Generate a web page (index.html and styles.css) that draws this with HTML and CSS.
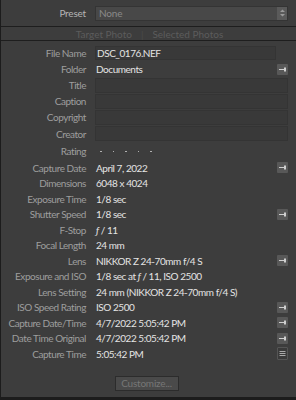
FILE: index.html
```html
<!DOCTYPE html>
<html lang="en">
<head>
  <meta charset="UTF-8" />
  <title>Metadata</title>
  <link rel="stylesheet" href="styles.css">
</head>
<body>

  <div class="panel">
    <div class="preset-row">
      <span class="label">Preset</span>
      <div class="select">
        <span>None</span>
        <span class="stepper">
          <svg width="5" height="8" viewBox="0 0 5 8"><path d="M0 3 L2.5 0.5 L5 3 Z M0 5 L2.5 7.5 L5 5 Z" fill="#9a9a9a"/></svg>
        </span>
      </div>
    </div>

    <div class="tabs">
      <span>Target Photo</span>
      <span class="sep">|</span>
      <span>Selected Photos</span>
    </div>

    <div class="fields">
      <div class="row first">
        <span class="label">File Name</span>
        <span class="value box">DSC_0176.NEF</span>
      </div>
      <div class="row">
        <span class="label">Folder</span>
        <span class="value">Documents</span>
        <span class="icon"><svg width="11" height="11" viewBox="0 0 11 11"><path d="M2 5.5 H7" stroke="#cfcfcf" stroke-width="1"/><rect x="7" y="3.5" width="2" height="4" fill="#cfcfcf"/></svg></span>
      </div>
      <div class="row">
        <span class="label">Title</span>
        <span class="value box wide"></span>
      </div>
      <div class="row">
        <span class="label">Caption</span>
        <span class="value box wide"></span>
      </div>
      <div class="row">
        <span class="label">Copyright</span>
        <span class="value box wide"></span>
      </div>
      <div class="row tall">
        <span class="label">Creator</span>
        <span class="value box wide"></span>
      </div>
      <div class="row rating-row">
        <span class="label">Rating</span>
        <span class="value rating"><i></i><i></i><i></i><i></i><i></i></span>
      </div>

      <div class="exif">
        <div class="row">
          <span class="label">Capture Date</span>
          <span class="value">April 7, 2022</span>
          <span class="icon"><svg width="11" height="11" viewBox="0 0 11 11"><path d="M2 5.5 H7" stroke="#cfcfcf" stroke-width="1"/><rect x="7" y="3.5" width="2" height="4" fill="#cfcfcf"/></svg></span>
        </div>
        <div class="row">
          <span class="label">Dimensions</span>
          <span class="value">6048 x 4024</span>
        </div>
        <div class="row">
          <span class="label">Exposure Time</span>
          <span class="value">1/8 sec</span>
        </div>
        <div class="row">
          <span class="label">Shutter Speed</span>
          <span class="value">1/8 sec</span>
          <span class="icon"><svg width="11" height="11" viewBox="0 0 11 11"><path d="M2 5.5 H7" stroke="#cfcfcf" stroke-width="1"/><rect x="7" y="3.5" width="2" height="4" fill="#cfcfcf"/></svg></span>
        </div>
        <div class="row">
          <span class="label">F-Stop</span>
          <span class="value"><em>ƒ</em> / 11</span>
        </div>
        <div class="row">
          <span class="label">Focal Length</span>
          <span class="value">24 mm</span>
        </div>
        <div class="row">
          <span class="label">Lens</span>
          <span class="value">NIKKOR Z 24-70mm f/4 S</span>
          <span class="icon"><svg width="11" height="11" viewBox="0 0 11 11"><path d="M2 5.5 H7" stroke="#cfcfcf" stroke-width="1"/><rect x="7" y="3.5" width="2" height="4" fill="#cfcfcf"/></svg></span>
        </div>
        <div class="row">
          <span class="label">Exposure and ISO</span>
          <span class="value">1/8 sec at <em>ƒ</em> / 11, ISO 2500</span>
        </div>
        <div class="row">
          <span class="label">Lens Setting</span>
          <span class="value">24 mm (NIKKOR Z 24-70mm f/4 S)</span>
        </div>
        <div class="row">
          <span class="label">ISO Speed Rating</span>
          <span class="value">ISO 2500</span>
          <span class="icon"><svg width="11" height="11" viewBox="0 0 11 11"><path d="M2 5.5 H7" stroke="#cfcfcf" stroke-width="1"/><rect x="7" y="3.5" width="2" height="4" fill="#cfcfcf"/></svg></span>
        </div>
        <div class="row">
          <span class="label">Capture Date/Time</span>
          <span class="value">4/7/2022 5:05:42 PM</span>
          <span class="icon"><svg width="11" height="11" viewBox="0 0 11 11"><path d="M2 5.5 H7" stroke="#cfcfcf" stroke-width="1"/><rect x="7" y="3.5" width="2" height="4" fill="#cfcfcf"/></svg></span>
        </div>
        <div class="row">
          <span class="label">Date Time Original</span>
          <span class="value">4/7/2022 5:05:42 PM</span>
          <span class="icon"><svg width="11" height="11" viewBox="0 0 11 11"><path d="M2 5.5 H7" stroke="#cfcfcf" stroke-width="1"/><rect x="7" y="3.5" width="2" height="4" fill="#cfcfcf"/></svg></span>
        </div>
        <div class="row">
          <span class="label">Capture Time</span>
          <span class="value">5:05:42 PM</span>
          <span class="icon list"><svg width="11" height="13" viewBox="0 0 11 13"><path d="M2.5 4.5 H8.5 M2.5 6.5 H8.5 M2.5 8.5 H8.5" stroke="#a8a8a8" stroke-width="1"/></svg></span>
        </div>
      </div>
    </div>

    <div class="footer">
      <button type="button">Customize...</button>
    </div>
  </div>

</body>
</html>
```

FILE: styles.css
```css
body {
  margin: 0;
  background: #1c1c1c;
  font-family: Lato, "Open Sans", sans-serif;
  font-size: 10px;
  letter-spacing: -0.45px;
}

.panel {
  width: 295px;
  height: 397px;
  background: #3d3d3d;
  border-left: 1px solid #1c1c1c;
  box-sizing: content-box;
}

.label {
  color: #9e9e9e;
  text-align: right;
  padding-right: 9px;
  white-space: nowrap;
}

.preset-row {
  display: grid;
  grid-template-columns: 94px 1fr;
  align-items: center;
  height: 26px;
  padding-right: 8px;
}

.preset-row .label {
  color: #b4b4b4;
  letter-spacing: -0.2px;
}

.select {
  display: flex;
  justify-content: space-between;
  align-items: center;
  height: 13px;
  background: #484848;
  border: 1px solid #343434;
  color: #8a8a8a;
  padding-left: 3px;
  letter-spacing: -0.2px;
}

.stepper {
  display: flex;
  align-items: center;
  justify-content: center;
  width: 10px;
  height: 13px;
  background: #5a5a5a;
}

.tabs {
  display: flex;
  justify-content: center;
  align-items: center;
  gap: 9px;
  height: 13px;
  border-top: 1px solid #1e1e1e;
  border-bottom: 1px solid #1e1e1e;
  color: #5c5c5c;
  padding-left: 2px;
  letter-spacing: 0;
}

.tabs .sep {
  color: #4a4a4a;
}

.fields {
  padding-top: 4px;
}

.row {
  display: grid;
  grid-template-columns: 94px 1fr 12px;
  align-items: center;
  height: 16px;
  padding-right: 8px;
}

.row.tall {
  height: 17px;
}

.rating-row {
  height: 18px;
}

.exif .row {
  height: 15.5px;
}

.value {
  color: #e4e4e4;
  padding-left: 1px;
  white-space: nowrap;
}

.value em {
  font-style: italic;
}

.box {
  height: 14px;
  background: #393939;
  border: 1px solid #343434;
  box-sizing: border-box;
  display: flex;
  align-items: center;
}

.box.wide {
  height: 15px;
  grid-column: 2 / 4;
}

.rating {
  display: flex;
  gap: 11px;
  padding-left: 5px;
  padding-top: 1px;
}

.rating i {
  width: 1.5px;
  height: 1.5px;
  background: #b0b0b0;
}

.icon {
  justify-self: end;
  width: 11px;
  height: 11px;
  background: #585858;
  border-radius: 1px;
  display: flex;
}

.icon.list {
  height: 13px;
  background: #3a3a3a;
  border: 1px solid #555;
  box-sizing: border-box;
  width: 11px;
  align-items: center;
  justify-content: center;
}

.icon.list svg {
  flex: none;
}

.footer {
  display: flex;
  justify-content: center;
  padding-top: 14px;
  padding-right: 4px;
}

.footer button {
  width: 64px;
  height: 15px;
  padding: 0;
  background: #4a4a4a;
  border: 1px solid #2c2c2c;
  color: #777;
  font-family: Lato, sans-serif;
  font-size: 10px;
  letter-spacing: -0.2px;
}
```
